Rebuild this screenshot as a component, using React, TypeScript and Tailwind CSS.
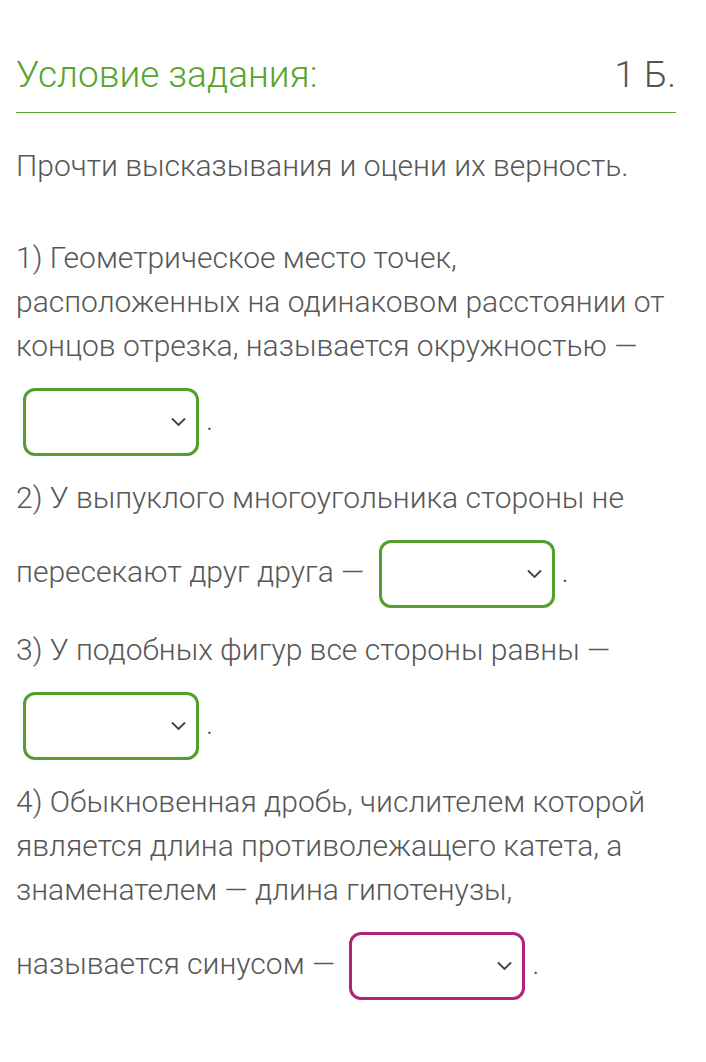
import React from 'react'

const Select = ({ tone = 'green' }: { tone?: 'green' | 'pink' }) => (
  <span
    className={
      'relative mx-[7px] my-[20px] inline-block h-[68px] w-[176px] rounded-[12px] border-[3px] bg-white align-middle ' +
      (tone === 'green' ? 'border-[#519f2d]' : 'border-[#b3237a]')
    }
  >
    <svg
      className="absolute top-1/2 right-[10px] -translate-y-1/2"
      width="15"
      height="10"
      viewBox="0 0 15 10"
      fill="none"
    >
      <path d="M1.5 2L7.5 8l6-6" stroke="#444" strokeWidth="1.9" strokeLinecap="round" />
    </svg>
  </span>
)

export default function App() {
  return (
    <div className="min-h-[1062px] w-full bg-white pl-4 pr-[30px] pt-[51px] font-['Roboto',sans-serif] font-light">
      <div className="flex items-baseline justify-between border-b border-[#5aa33a] pb-[13px]">
        <h1 className="text-[37px] leading-[48px] text-[#55a62c]">Условие задания:</h1>
        <span className="text-[37px] leading-[48px] text-[#555]">1 Б.</span>
      </div>

      <div className="pt-[31px] text-[30px] leading-[44px] text-[#575757]">
        <p>Прочти высказывания и оцени их верность.</p>
        <p className="mt-[48px]">
          1) Геометрическое место точек, расположенных на одинаковом расстоянии от концов отрезка,
          называется окружностью — <Select />.
        </p>
        <p>
          2) У выпуклого многоугольника стороны не пересекают друг друга — <Select />.
        </p>
        <p>
          3) У подобных фигур все стороны равны — <Select />.
        </p>
        <p>
          4) Обыкновенная дробь, числителем которой является длина противолежащего катета, а
          знаменателем — длина гипотенузы, называется синусом — <Select tone="pink" />.
        </p>
      </div>
    </div>
  )
}
